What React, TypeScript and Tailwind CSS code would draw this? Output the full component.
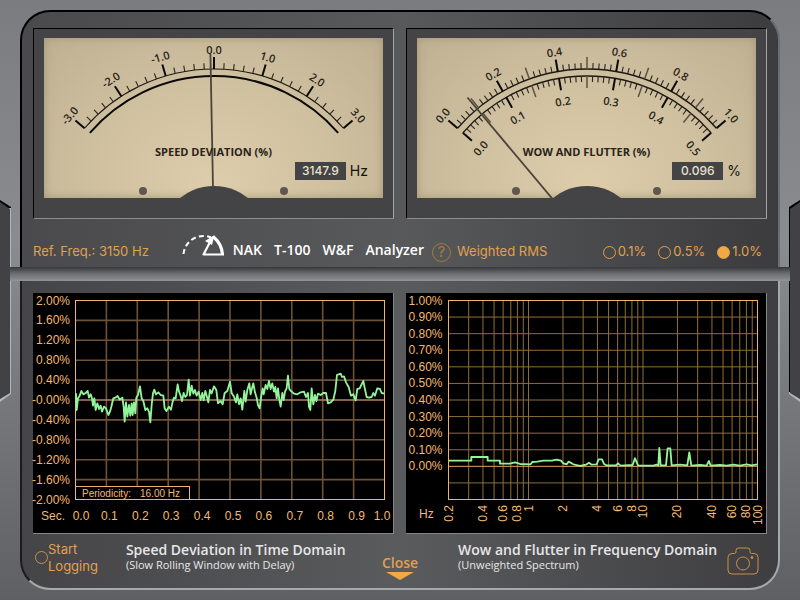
import React, { useState } from 'react';

interface MajorTick {
  value: number;
  label: string;
}

const ARC_CENTER = { x: 170, y: 202 };
const OUTER_RADIUS = 171;
const INNER_RADIUS = 164;
const SWEEP = 49.2;

const DEVIATION_TICKS: MajorTick[] = [-3, -2, -1, 0, 1, 2, 3].map((v) => ({
  value: v,
  label: v.toFixed(1),
}));
const OUTER_TICKS: MajorTick[] = [0, 0.2, 0.4, 0.6, 0.8, 1].map((v) => ({
  value: v,
  label: v.toFixed(1),
}));
const INNER_TICKS: MajorTick[] = [0, 0.1, 0.2, 0.3, 0.4, 0.5].map((v) => ({
  value: v,
  label: v.toFixed(1),
}));

const PERCENT_LABELS = [
  '2.00%', '1.60%', '1.20%', '0.80%', '0.40%', '-0.00%',
  '-0.40%', '-0.80%', '-1.20%', '-1.60%', '-2.00%',
];
const FLUTTER_LABELS = [
  '1.00%', '0.90%', '0.80%', '0.70%', '0.60%', '0.50%',
  '0.40%', '0.30%', '0.20%', '0.10%', '0.00%',
];
const FREQ_LABELS = [0.2, 0.4, 0.6, 0.8, 1, 2, 4, 6, 8, 10, 20, 40, 60, 80, 100];
const FREQ_LINES = [
  0.3, 0.4, 0.5, 0.6, 0.7, 0.8, 0.9, 1, 2, 3, 4, 5, 6, 7, 8, 9, 10, 20, 30, 40, 50, 60, 70, 80, 90,
];

// Plot area shared by both charts
const PLOT = { left: 42.5, right: 351.5, top: 7.5, bottom: 206.5 };

const DEVIATION_TRACE =
  '6,85 8,135 12,100 17,92 22,78 28,88 35,84 41,78 45,98 50,88 54,100 57,122 61,100 65,135 70,115 75,132 80,122 84,140 90,125 96,130 103,150 108,140 112,125 118,100 124,98 131,93 137,104 145,98 149,125 152,170 156,112 160,155 165,120 169,152 173,115 176,150 180,112 184,145 187,98 192,90 198,64 203,100 208,108 214,135 220,130 225,140 229,172 233,120 237,85 241,74 246,88 253,82 260,90 268,92 272,130 277,138 285,125 291,134 296,110 300,98 305,100 311,58 315,80 319,90 324,108 329,84 334,96 339,90 344,44 348,92 353,62 358,86 363,75 368,92 374,80 380,105 385,84 389,106 394,78 398,92 403,112 408,75 413,85 420,64 427,75 432,115 440,108 446,118 452,84 460,78 468,50 473,84 480,95 486,112 490,88 495,118 500,100 505,134 511,78 515,110 520,75 526,55 530,88 534,70 538,55 543,82 548,98 552,120 557,130 562,92 566,70 569,88 575,60 580,72 585,48 590,72 595,55 600,80 604,66 608,100 612,70 616,104 620,125 625,84 629,105 633,80 638,70 642,32 646,72 651,78 660,86 670,88 680,82 690,80 696,96 702,84 705,125 709,135 713,70 718,118 723,90 727,108 732,86 740,90 748,84 756,84 762,115 770,112 778,104 784,78 789,30 794,28 800,26 804,36 810,34 816,52 824,66 831,92 838,88 845,106 850,72 857,70 868,48 872,68 878,96 885,98 893,96 898,84 903,92 910,70 918,72 923,84 931,86';

const SPECTRUM_TRACE =
  '147,512 214,512 214,501 263,501 263,512 300,512 300,521 330,521 345,517 360,522 392,523 397,516 412,515 430,512 455,512 470,509 483,512 490,520 500,523 506,515 520,523 540,528 558,524 567,518 575,524 590,523 596,508 606,508 612,522 620,526 648,526 654,520 662,527 698,525 705,505 714,526 760,527 770,524 775,526 778,474 782,526 798,526 803,475 811,475 815,526 840,524 862,526 868,487 874,527 900,525 920,527 927,513 932,527 960,525 980,527 1000,524 1020,527 1040,523 1055,526 1072,523';

function polar(angle: number, radius: number) {
  const rad = (angle * Math.PI) / 180;
  return {
    x: ARC_CENTER.x + radius * Math.sin(rad),
    y: ARC_CENTER.y - radius * Math.cos(rad),
  };
}

function arcPath(radius: number, sweep: number) {
  const a = polar(-sweep, radius);
  const b = polar(sweep, radius);
  return `M${a.x} ${a.y}A${radius} ${radius} 0 0 1 ${b.x} ${b.y}`;
}

function Tick({
  angle,
  from,
  to,
  width,
  color,
}: {
  angle: number;
  from: number;
  to: number;
  width: number;
  color: string;
}) {
  const a = polar(angle, from);
  const b = polar(angle, to);
  return <line x1={a.x} y1={a.y} x2={b.x} y2={b.y} stroke={color} strokeWidth={width} />;
}

// One row of ticks plus its numbers; direction is 1 for outward, -1 for inward
function Scale({
  ticks,
  radius,
  direction,
  divisions,
  labelRadius,
}: {
  ticks: MajorTick[];
  radius: number;
  direction: 1 | -1;
  divisions: number;
  labelRadius: number;
}) {
  const steps = (ticks.length - 1) * divisions;
  const minor = [];
  for (let i = 0; i <= steps; i++) {
    if (i % divisions === 0) continue;
    const isMid = divisions === 10 && i % 5 === 0;
    minor.push(
      <Tick
        key={i}
        angle={-SWEEP + (2 * SWEEP * i) / steps}
        from={radius}
        to={radius + direction * (isMid ? 12 : 6)}
        width={isMid ? 1.5 : 1.1}
        color={isMid ? '#5a5244' : '#2a251c'}
      />
    );
  }
  return (
    <g>
      {minor}
      {ticks.map((t, i) => {
        const angle = -SWEEP + (2 * SWEEP * i) / (ticks.length - 1);
        const at = polar(angle, labelRadius);
        return (
          <g key={t.value}>
            <Tick angle={angle} from={radius} to={radius + direction * 12} width={2} color="#0c0a07" />
            <text
              x={at.x}
              y={at.y}
              transform={`rotate(${angle} ${at.x} ${at.y})`}
              textAnchor="middle"
              dominantBaseline="central"
              className="fill-[#2a2419] font-['Open_Sans',sans-serif] text-[11px] font-semibold"
            >
              {t.label}
            </text>
          </g>
        );
      })}
    </g>
  );
}

function Meter({
  title,
  reading,
  unit,
  needle,
  children,
}: {
  title: string;
  reading: string;
  unit: string;
  needle: { angle: number; length: number };
  children: React.ReactNode;
}) {
  const tip = polar(needle.angle, needle.length);
  return (
    <section className="border border-t-black border-l-black border-r-[#a4a5a7] border-b-[#8c8d8f] bg-[#444446] px-2.5 pt-[9px] pb-5">
      <div className="relative bg-radial-[at_50%_90%] from-[#ddcdab] via-[#cfc0a0] to-[#bfb093] shadow-[inset_0_0_8px_#a39576]">
        <svg viewBox="0 0 339 160" className="block w-full">
          {children}
          <line
            x1={ARC_CENTER.x}
            y1={ARC_CENTER.y}
            x2={tip.x}
            y2={tip.y}
            stroke="#4a443a"
            strokeWidth="1.8"
          />
          <circle cx={ARC_CENTER.x} cy={ARC_CENTER.y} r="54" fill="#444446" />
          <circle cx="99" cy="153" r="4" fill="#5f574f" />
          <circle cx="240" cy="153" r="4" fill="#5f574f" />
        </svg>
        <div className="absolute inset-0 flex flex-col justify-end pb-[18px]">
          <h2 className="text-center font-['Open_Sans',sans-serif] text-[11px] leading-4 font-bold text-[#2a2318]">
            {title}
          </h2>
          <div className="flex h-5 items-end justify-end gap-1 pr-[15px] font-['Inter',sans-serif]">
            <output className="w-[51px] bg-[#444446] text-center text-xs leading-[18px] font-medium text-[#e8e1cf]">
              {reading}
            </output>
            <span className="text-sm leading-[18px] text-[#14110b]">{unit}</span>
          </div>
        </div>
      </div>
    </section>
  );
}

function ChartPanel({ children }: { children: React.ReactNode }) {
  return (
    <section className="border-r border-b border-[#85868a] bg-black">
      <svg
        viewBox="0 0 360 240"
        className="block w-full overflow-visible font-['Liberation_Sans',sans-serif] text-xs"
      >
        {children}
      </svg>
    </section>
  );
}

function DeviationChart() {
  const dx = (PLOT.right - PLOT.left) / 10;
  const dy = (PLOT.bottom - PLOT.top) / 10;
  const steps = [1, 2, 3, 4, 5, 6, 7, 8, 9];
  return (
    <ChartPanel>
      <g stroke="#6e5236" strokeWidth="1.6">
        {steps.map((i) => (
          <line key={`v${i}`} x1={PLOT.left + i * dx} x2={PLOT.left + i * dx} y1={PLOT.top} y2={PLOT.bottom} />
        ))}
        {steps.map((i) => (
          <line
            key={`h${i}`}
            x1={PLOT.left}
            x2={PLOT.right}
            y1={PLOT.top + i * dy}
            y2={PLOT.top + i * dy}
            stroke={i === 5 ? '#b98361' : '#6e5236'}
          />
        ))}
      </g>
      <rect x={PLOT.left} y={PLOT.top} width={309} height={199} fill="none" stroke="#efb36d" />
      <rect x={PLOT.left} y="193.5" width="114" height="13" fill="#000" stroke="#efb36d" />
      <g fill="#f3b873">
        {PERCENT_LABELS.map((label, i) => (
          <text key={label} x="37" y={PLOT.top + i * dy} dy="4" textAnchor="end">
            {label}
          </text>
        ))}
        <text x="8" y="227">
          Sec.
        </text>
        {[0, 1, 2, 3, 4, 5, 6, 7, 8, 9, 10].map((i) => (
          <text key={i} x={i === 0 ? 48 : i === 10 ? 349 : 45.5 + i * dx} y="227" textAnchor="middle">
            {(i / 10).toFixed(1)}
          </text>
        ))}
        <text x="49" y="204" className="text-[10px]">
          Periodicity:
        </text>
        <text x="107" y="204" className="text-[10px]">
          16.00 Hz
        </text>
      </g>
      <polyline
        points={DEVIATION_TRACE}
        transform="translate(41 72) scale(0.3333)"
        fill="none"
        stroke="#93f59a"
        strokeWidth="5.5"
        strokeLinejoin="round"
      />
    </ChartPanel>
  );
}

function SpectrumChart() {
  const dy = (PLOT.bottom - PLOT.top) / 12;
  const decades = Math.log10(100 / 0.2);
  const freqX = (hz: number) => PLOT.left + (Math.log10(hz / 0.2) / decades) * (PLOT.right - PLOT.left);
  return (
    <ChartPanel>
      <g stroke="#8f6e3a">
        {FREQ_LINES.map((hz) => (
          <line key={hz} x1={freqX(hz)} x2={freqX(hz)} y1={PLOT.top} y2={PLOT.bottom} />
        ))}
        {[1, 2, 3, 4, 5, 6, 7, 8, 9, 10, 11].map((i) => (
          <line
            key={i}
            x1={PLOT.left}
            x2={PLOT.right}
            y1={PLOT.top + i * dy}
            y2={PLOT.top + i * dy}
            stroke={i === 10 ? '#d9a06a' : '#8f6e3a'}
          />
        ))}
      </g>
      <rect x={PLOT.left} y={PLOT.top} width={309} height={199} fill="none" stroke="#efb36d" />
      <g fill="#f3b873">
        {FLUTTER_LABELS.map((label, i) => (
          <text key={label} x="36.5" y={PLOT.top + i * dy} dy="4" textAnchor="end">
            {label}
          </text>
        ))}
        <text x="13" y="225">
          Hz
        </text>
        {FREQ_LABELS.map((hz) => (
          <text
            key={hz}
            textAnchor="end"
            transform={`translate(${freqX(hz) + 4} 212) rotate(-90)`}
          >
            {hz}
          </text>
        ))}
      </g>
      <polyline
        points={SPECTRUM_TRACE}
        transform="translate(-6 -3) scale(0.3333)"
        fill="none"
        stroke="#93f59a"
        strokeWidth="5.5"
        strokeLinejoin="round"
      />
    </ChartPanel>
  );
}

function DialLogo() {
  return (
    <svg width="44" height="24" viewBox="0 0 44 24" fill="none" stroke="#fff" aria-hidden="true">
      <path d="M2.500 20A20 20 0 0 1 30 3.500" strokeWidth="2" strokeDasharray="5 3.200" />
      <path d="M32.500 3C38.500 8 41 14 41.500 20.500" strokeWidth="3.200" />
      <path d="M43 20.500H22.500L29 8" strokeWidth="2.200" strokeLinejoin="round" />
      <path d="M33.500 1L31 11L24 7Z" fill="#fff" stroke="none" />
    </svg>
  );
}

function CameraIcon() {
  return (
    <svg width="32" height="28" viewBox="0 0 32 28" fill="none" stroke="#c8904a" aria-hidden="true">
      <path d="M5 6.500H7.500Q9 6.500 9 5V3.500Q9 1 11.500 1H20.500Q23 1 23 3.500V5Q23 6.500 24.500 6.500H27Q31 6.500 31 10.500V23Q31 27 27 27H5Q1 27 1 23V10.500Q1 6.500 5 6.500Z" />
      <circle cx="16" cy="16.500" r="6.500" />
      <circle cx="25" cy="10.500" r="1" fill="#c8904a" />
    </svg>
  );
}

const RANGES = ['0.1%', '0.5%', '1.0%'];

const App: React.FC = () => {
  const [range, setRange] = useState('1.0%');
  const [logging, setLogging] = useState(false);

  return (
    <main className="relative min-h-screen bg-linear-to-b from-[#7b7c80] via-[#8b8c90] via-40% to-[#5f6064] py-2.5">
      {/* Side notches */}
      <div className="absolute top-[200px] left-0 h-[202px] w-[11px] bg-linear-to-b from-black from-4% to-[#b4b5b8] to-4% [clip-path:polygon(0_0,100%_7px,100%_194px,0_100%)]">
        <div className="h-[202px] w-2.5 bg-[#424244] [clip-path:polygon(0_2px,100%_9px,100%_193px,0_199px)]" />
      </div>
      <div className="absolute top-[200px] right-0 h-[202px] w-[11px] bg-linear-to-b from-black from-95% to-[#b4b5b8] to-95% [clip-path:polygon(100%_0,0_7px,0_194px,100%_100%)]">
        <div className="ml-px h-[202px] w-2.5 bg-[#424244] [clip-path:polygon(100%_2px,0_9px,0_193px,100%_199px)]" />
      </div>

      <div className="mx-5 rounded-t-[30px] border-2 border-b-0 border-t-black border-l-black border-r-[#6c6d70] bg-linear-to-r from-[#4a4a4c] via-[#58595b] via-50% to-[#3c3c3e] px-[11px] pt-4">
        <div className="grid grid-cols-2 gap-3">
          <Meter title="SPEED DEVIATION (%)" reading="3147.9" unit="Hz" needle={{ angle: -1.1, length: 186 }}>
            <path d={arcPath(OUTER_RADIUS, SWEEP)} fill="none" stroke="#1d1912" strokeWidth="1.1" />
            <path d={arcPath(INNER_RADIUS, SWEEP)} fill="none" stroke="#0c0a07" strokeWidth="2" />
            <Scale ticks={DEVIATION_TICKS} radius={OUTER_RADIUS} direction={1} divisions={5} labelRadius={191} />
          </Meter>
          <Meter title="WOW AND FLUTTER (%)" reading="0.096" unit="%" needle={{ angle: -40, length: 186 }}>
            <path d={arcPath(OUTER_RADIUS, SWEEP)} fill="none" stroke="#1d1912" strokeWidth="1.4" />
            <path d={arcPath(INNER_RADIUS, SWEEP)} fill="none" stroke="#1d1912" strokeWidth="1.4" />
            <Scale ticks={OUTER_TICKS} radius={OUTER_RADIUS} direction={1} divisions={10} labelRadius={191} />
            <Scale ticks={INNER_TICKS} radius={INNER_RADIUS} direction={-1} divisions={10} labelRadius={141} />
          </Meter>
        </div>

        <div className="flex h-12 items-center pt-[18px] font-['Inter',sans-serif] text-[13px] text-[#e3a04c]">
          <p>Ref. Freq.: 3150 Hz</p>
          <div className="ml-8 flex items-center gap-2 pb-3">
            <DialLogo />
            <h1 className="flex gap-3 pt-2 font-['Open_Sans',sans-serif] text-sm font-semibold text-white">
              <span>NAK</span>
              <span>T-100</span>
              <span>W&amp;F</span>
              <span>Analyzer</span>
            </h1>
          </div>
          <button
            type="button"
            aria-label="Help"
            className="ml-2 size-[19px] rounded-full border border-[#a5793f] text-[15px] leading-4 text-[#a5793f]"
          >
            ?
          </button>
          <p className="ml-1.5">Weighted RMS</p>
          <fieldset className="ml-auto flex gap-3 pr-[5px]">
            {RANGES.map((r) => (
              <label key={r} className="flex items-center gap-0.5">
                <input
                  type="radio"
                  name="range"
                  value={r}
                  checked={range === r}
                  onChange={() => setRange(r)}
                  className="size-[13px] appearance-none rounded-full border border-[#e3a04c] checked:bg-[#f2a843]"
                />
                {r}
              </label>
            ))}
          </fieldset>
        </div>
      </div>

      {/* Divider bar */}
      <div className="relative mx-2.5 h-3.5 bg-linear-to-b from-[#37383a] via-[#6a6b6e] via-45% to-[#929396]" />

      <div className="mx-5 rounded-b-[30px] border-2 border-t-0 border-l-[#1c1c1e] border-r-[#a6a8aa] border-b-[#a6a8aa] bg-linear-to-r from-[#454547] via-[#5a5b5d] via-50% to-[#3e3e40] px-[11px] pt-3">
        <div className="grid grid-cols-2 gap-3">
          <DeviationChart />
          <SpectrumChart />
        </div>

        <div className="grid h-[54px] grid-cols-[1fr_auto_1fr] items-center font-['Open_Sans',sans-serif]">
          <div className="flex items-center gap-7 pb-[7px]">
            <label className="flex items-center pl-0.5 font-['Inter',sans-serif] text-[13px] leading-[17px] text-[#e3a04c]">
              <input
                type="checkbox"
                checked={logging}
                onChange={() => setLogging(!logging)}
                className="size-[13px] appearance-none rounded-full border border-[#c8904a] checked:bg-[#f2a843]"
              />
              <span>
                Start
                <br />
                Logging
              </span>
            </label>
            <div className="pb-0.5 text-[#e6e6e8]">
              <h3 className="text-sm leading-4 font-semibold">Speed Deviation in Time Domain</h3>
              <p className="text-[11px] leading-[14px]">(Slow Rolling Window with Delay)</p>
            </div>
          </div>
          <button type="button" className="flex flex-col items-center pt-3 text-sm leading-[18px] font-semibold text-[#e3a04c]">
            Close
            <svg width="28" height="8" viewBox="0 0 28 8" aria-hidden="true">
              <path d="M0 0H28L14 8Z" fill="#f2a843" />
            </svg>
          </button>
          <div className="flex items-center justify-between pr-2 pb-[7px] pl-10">
            <div className="pb-0.5 text-[#e6e6e8]">
              <h3 className="text-sm leading-4 font-semibold">Wow and Flutter in Frequency Domain</h3>
              <p className="text-[11px] leading-[14px]">(Unweighted Spectrum)</p>
            </div>
            <button type="button" aria-label="Save snapshot" className="pt-1.5">
              <CameraIcon />
            </button>
          </div>
        </div>
      </div>
    </main>
  );
};

export default App;
